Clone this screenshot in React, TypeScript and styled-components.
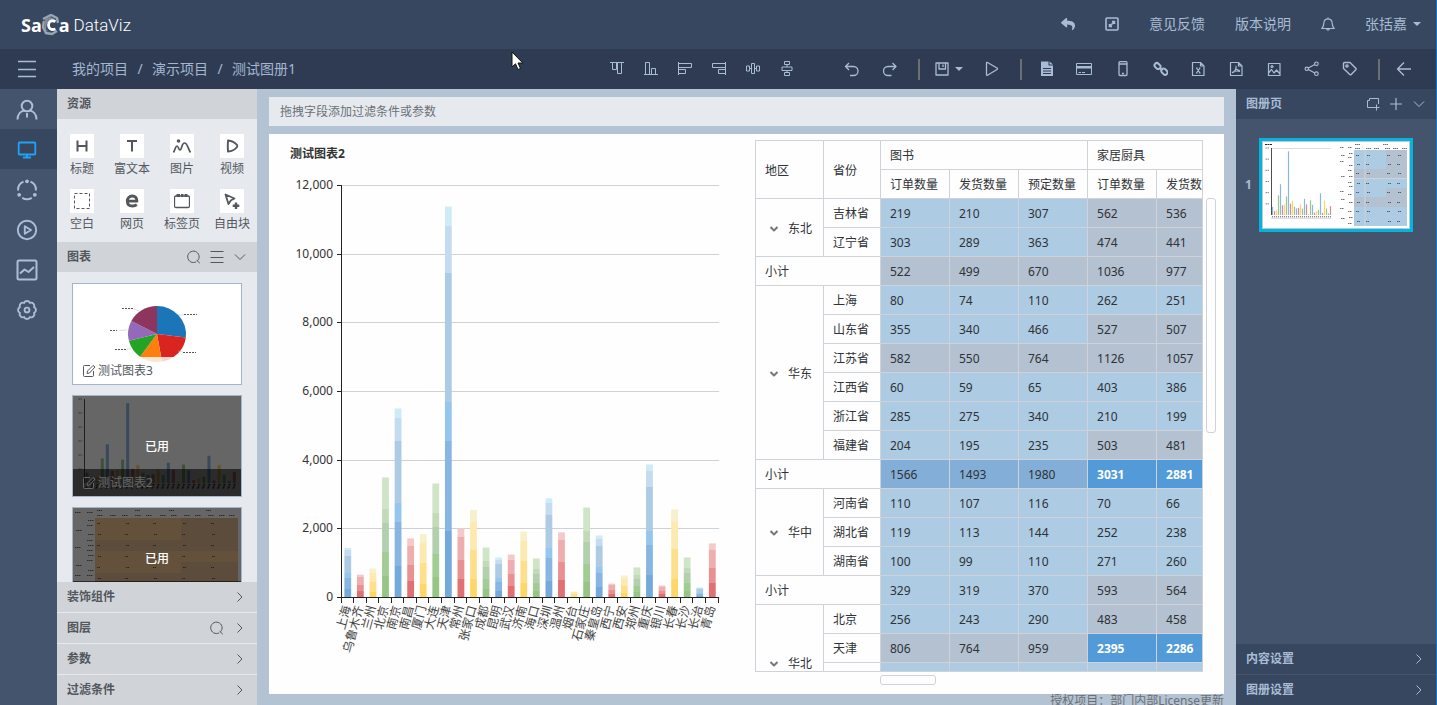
import React from 'react';
import styled, { createGlobalStyle } from 'styled-components';
import { FaReply } from 'react-icons/fa';

const GlobalStyle = createGlobalStyle`
  * { box-sizing: border-box; }
  body { margin: 0; overflow: hidden; background: #b4c3d3; }
  body, button, input { font-family: "Noto Sans", "Noto Sans CJK SC", sans-serif; font-size: 12px; line-height: 20px; }
  button { border: 0; padding: 0; background: none; color: inherit; cursor: pointer; }
  a { color: inherit; text-decoration: none; }
  h2, p, ul { margin: 0; padding: 0; font-size: inherit; list-style: none; }
`;

/* ---------- shell ---------- */

const Shell = styled.div`
  display: flex;
  flex-direction: column;
  height: 100vh;
  border-right: 1px solid #0a78d0;
  color: #a9bcd6;
`;
const Header = styled.header`
  display: flex;
  align-items: center;
  justify-content: space-between;
  flex: none;
  height: 49px;
  padding: 0 15px 0 21px;
  background: #37475f;
`;
const Logo = styled.a`
  display: flex;
  align-items: center;
  height: 24px;
  color: #fff;
  font-family: Roboto, sans-serif;
  font-size: 17px;
  line-height: 24px;
`;
const LogoBold = styled.b`
  font-family: "Noto Sans", sans-serif;
  font-size: 18px;
`;
const LogoName = styled.span`
  margin-left: 4px;
  font-weight: 300;
`;
const HeaderNav = styled.nav`
  display: flex;
  align-items: center;
  gap: 30px;
  padding-bottom: 2px;
  font-size: 14px;
`;
const HeaderButton = styled.button`
  display: flex;
  align-items: center;
  gap: 6px;
  font-size: 14px;
`;
const Toolbar = styled.div`
  display: flex;
  align-items: center;
  flex: none;
  height: 40px;
  padding-right: 13px;
  background: #2f3b52;
`;
const MenuButton = styled.button`
  display: grid;
  place-items: center;
  width: 54px;
  height: 40px;
`;
const Crumbs = styled.nav`
  display: flex;
  flex: 1;
  padding-left: 18px;
  font-size: 14px;
  color: #a3b7d1;
`;
const Slash = styled.span`
  width: 24px;
  text-align: center;
`;
const ToolGroup = styled.div<{ $end?: number }>`
  display: flex;
  margin-right: ${(p) => p.$end ?? 0}px;
`;
const ToolButton = styled.button<{ $w?: number }>`
  display: flex;
  align-items: center;
  justify-content: center;
  gap: 6px;
  width: ${(p) => p.$w ?? 38}px;
  height: 40px;
`;
const Divider = styled.span`
  width: 2px;
  height: 21px;
  margin: 0 5px 0 9px;
  background: #6d6f72;
`;
const Body = styled.div`
  display: flex;
  flex: 1;
  min-height: 0;
`;
const Rail = styled.nav`
  flex: none;
  width: 57px;
  background: #45546d;
`;
const RailButton = styled.button<{ $active?: boolean }>`
  display: grid;
  place-items: center;
  width: 100%;
  height: 40px;
  padding: 2px 3px 0 0;
  background: ${(p) => (p.$active ? '#37475f' : 'transparent')};
  color: ${(p) => (p.$active ? '#21a3f5' : '#aabfd8')};
`;

/* ---------- resource sidebar ---------- */

const Sidebar = styled.aside`
  display: flex;
  flex-direction: column;
  flex: none;
  width: 200px;
  background: #e6eaef;
  color: #53575c;
`;
const PanelHeader = styled.div`
  display: flex;
  align-items: center;
  gap: 9px;
  flex: none;
  height: 30px;
  padding: 0 10px;
  background: #d0d4d9;
`;
const PanelTitle = styled.h2`
  flex: 1;
  font-weight: 700;
`;
const IconButton = styled.button`
  display: grid;
  place-items: center;
  width: 14px;
  height: 20px;
`;
const ResourceGrid = styled.div`
  display: grid;
  grid-template-columns: repeat(4, 1fr);
  row-gap: 10px;
  padding: 15px 0 8px;
`;
const ResourceButton = styled.button`
  display: flex;
  flex-direction: column;
  align-items: center;
  gap: 1px;
  white-space: nowrap;
`;
const Tile = styled.span`
  display: grid;
  place-items: center;
  width: 24px;
  height: 24px;
  background: #fff;
`;
const CardList = styled.div`
  display: flex;
  flex-direction: column;
  gap: 10px;
  flex: 1;
  min-height: 0;
  overflow: hidden;
  padding: 11px 15px;
`;
const Card = styled.article`
  position: relative;
  flex: none;
  height: 102px;
  border: 1px solid #a5b4c8;
  background: #fff;
`;
const CardArt = styled.svg`
  display: block;
  width: 100%;
  height: 100%;
`;
const CardCaption = styled.div<{ $dark?: boolean }>`
  position: absolute;
  inset: auto 0 0 0;
  display: flex;
  align-items: center;
  gap: 2px;
  height: 27px;
  padding-left: 9px;
  background: ${(p) => (p.$dark ? 'rgba(0,0,0,.58)' : 'rgba(255,255,255,.8)')};
  color: ${(p) => (p.$dark ? '#fff' : '#53575c')};
`;
const CardOverlay = styled.div`
  position: absolute;
  inset: 0;
  display: grid;
  place-items: center;
  padding-top: 2px;
  background: rgba(0, 0, 0, 0.6);
  color: #fff;
  font-weight: 500;
`;
const SectionList = styled.div`
  display: flex;
  flex-direction: column;
  gap: 1px;
  flex: none;
`;

/* ---------- workspace ---------- */

const Main = styled.main`
  display: flex;
  flex-direction: column;
  flex: 1;
  min-width: 0;
  padding: 8px 12px 0;
  background: #b4c3d3;
`;
const FilterDrop = styled.div`
  flex: none;
  height: 29px;
  margin-bottom: 8px;
  padding: 5px 11px;
  background: #e6eaef;
  color: #6c7075;
`;
const Canvas = styled.section`
  display: grid;
  grid-template-columns: minmax(0, 1fr) 461px;
  grid-template-rows: minmax(0, 1fr);
  flex: 1;
  min-height: 0;
  padding: 6px 8px 9px 20px;
  background: #fefefe;
  color: #333;
`;
const ChartBox = styled.div`
  padding-top: 4px;
  overflow: hidden;
`;
const ChartTitle = styled.h2`
  font-weight: 700;
  padding-left: 1px;
`;
const ChartSvg = styled.svg`
  display: block;
  width: 100%;
  height: auto;
`;
const TableBox = styled.div`
  display: grid;
  grid-template-columns: minmax(0, 1fr) 10px;
  grid-template-rows: minmax(0, 1fr) 10px;
  gap: 3px;
  min-height: 0;
`;
const TableClip = styled.div`
  overflow: hidden;
  border: 1px solid #cfd2d8;
`;
const Table = styled.table`
  table-layout: fixed;
  width: 470px;
  border-spacing: 0;
  color: #2f3236;
`;
const cellBase = `
  height: 29px;
  padding: 2px 0 0 9px;
  border: solid #cfd2d8;
  border-width: 0 1px 1px 0;
  text-align: left;
  font-weight: 400;
  white-space: nowrap;
`;
const HeadCell = styled.th`
  ${cellBase}
`;
type Tone = 'light' | 'grey' | 'mid' | 'strong';
const tones: Record<Tone, string> = {
  light: '#adcbe3',
  grey: '#b3c1d1',
  mid: '#82aed7',
  strong: '#539ad8',
};
const DataCell = styled.td<{ $tone: Tone }>`
  ${cellBase}
  background: ${(p) => tones[p.$tone]};
  color: ${(p) => (p.$tone === 'strong' ? '#fff' : '#2f3236')};
  font-weight: ${(p) => (p.$tone === 'strong' ? 700 : 400)};
`;
const GroupToggle = styled.button`
  display: flex;
  align-items: center;
  gap: 8px;
  padding-left: 3px;

  svg {
    color: #74777b;
  }
`;
const VerticalThumb = styled.div`
  width: 10px;
  height: 235px;
  margin-top: 58px;
  border: 1px solid #cfd2d8;
  border-radius: 3px;
`;
const HorizontalThumb = styled.div`
  width: 56px;
  height: 10px;
  margin-left: 125px;
  border: 1px solid #cfd2d8;
  border-radius: 3px;
`;
const License = styled.p`
  flex: none;
  height: 11px;
  line-height: 14px;
  overflow: hidden;
  text-align: right;
  color: #6b6f75;
`;

/* ---------- pages panel ---------- */

const PagesPanel = styled.aside`
  display: flex;
  flex-direction: column;
  flex: none;
  width: 200px;
  background: #45546d;
`;
const PagesHeader = styled(PanelHeader)`
  background: #37475f;
`;
const PageList = styled.ul`
  flex: 1;
  padding: 19px 23px 0 9px;
`;
const PageItem = styled.li`
  display: grid;
  grid-template-columns: 14px 1fr;
  align-items: center;
  font-weight: 700;
`;
const PageThumb = styled.button`
  display: block;
  height: 94px;
  border: 3px solid #04b4dc;
  background: #fff;
`;
const PagesSection = styled(PanelHeader)`
  height: 31px;
  border-top: 1px solid #45546d;
  background: #37475f;
`;
const Pointer = styled.svg`
  position: absolute;
  left: 511px;
  top: 51px;
  pointer-events: none;
`;

/* ---------- icons ---------- */

type IconProps = { d: string; size?: number; box?: number; w?: number; fill?: string; children?: React.ReactNode };
const Icon = ({ d, size = 16, box = size, w = 1, fill, children }: IconProps) => (
  <svg width={size} height={size} viewBox={`0 0 ${box} ${box}`} fill="none" stroke="currentColor"
    strokeWidth={w} strokeLinejoin="round" aria-hidden="true">
    <path d={d} />
    {fill && <path d={fill} fill="currentColor" stroke="none" />}
    {children}
  </svg>
);
const Caret = () => (
  <svg width="8" height="4" viewBox="0 0 8 4" aria-hidden="true"><path d="M0 0H8L4 4Z" fill="currentColor" /></svg>
);
const RightChevron = () => <Icon size={14} d="M4.500 2.500L9 7L4.500 11.500" />;
const DownChevron = () => <Icon size={14} d="M2 4.500L7 9.500L12 4.500" />;
const SearchIcon = () => <Icon size={14} d="M10.500 10.800A5.700 5.700 0 1 0 9.200 11.800M9.600 10.200L12.800 13.200" />;

const alignTools = [
  ['顶部对齐', 'M1 1.500H15M3.500 1.500V8.500H7.500V1.500M8.500 1.500V12.500H12.500V1.500'],
  ['底部对齐', 'M1 13.500H15M2.500 13.500V1.500H6.500V13.500M8.500 13.500V7.500H12.500V13.500'],
  ['左对齐', 'M1.500 1V14M1.500 2.500H14.500V6.500H1.500M1.500 8.500H8.500V12.500H1.500'],
  ['右对齐', 'M14.500 1V14M14.500 2.500H1.500V6.500H14.500M14.500 8.500H7.500V12.500H14.500'],
  ['水平居中', 'M1.500 5H4.500V10H1.500ZM6.500 2.500H9.500V12.500H6.500ZM11.500 5H14.500V10H11.500ZM4.500 7.500H6.500M9.500 7.500H11.500'],
  ['垂直居中', 'M5.500 0.500H10.500V3.500H5.500ZM3 6H13V9.500H3ZM5.500 11.500H10.500V14.500H5.500ZM8 3.500V6M8 9.500V11.500'],
];

const exportTools: [string, React.ReactNode][] = [
  ['文档', <svg key="i" width="16" height="16" viewBox="0 0 16 16"><path d="M3 0.500H10.500V4.500H15V15H3Z M11.500 0.500L15 3.500H11.500Z" fill="currentColor" /><path d="M5 7.500H13M5 10H13M5 12.500H13" stroke="#2f3b52" /></svg>],
  ['卡片', <Icon key="i" d="M0.500 2.500H15.500V13.500H0.500ZM2.500 11.500H5M6 11.500H9" fill="M1 5H15V7.500H1Z" />],
  ['手机', <Icon key="i" w={1.300} d="M6 0.700H12Q13 0.700 13 1.700V13.500Q13 14.500 12 14.500H6Q5 14.500 5 13.500V1.700Q5 0.700 6 0.700ZM5 3H13M8 12.500H10" />],
  ['链接', <Icon key="i" w={2} d="M9.500 9L8.300 7.800M7.700 7.400L8.500 6.600A2.600 2.600 0 0 0 8.300 4.600L6.500 2.700A2.300 2.300 0 0 0 3.200 6L5.100 7.900A2.300 2.300 0 0 0 7.700 7.400M10 8.500L9.300 9.200A2.600 2.600 0 0 0 9.700 11.300L11.500 13.100A2.300 2.300 0 0 0 14.800 9.800L13 8A2.300 2.300 0 0 0 10 8.500" />],
  ['导出表格', <Icon key="i" w={1.200} d="M2.500 1.500H10.500L14 5V14.500H2.500ZM10.500 1.500V5H14M6 7H7.500M9 7H10.500M6 12H7.500M9 12H10.500M6.500 7L10 12M10 7L6.500 12" />],
  ['导出文档', <Icon key="i" w={1.200} d="M2.500 1.500H10.500L14 5V14.500H2.500ZM10.500 1.500V5H14M7.500 5C8.500 5 8 7.500 7.500 8.500C7 10 5 12 4.500 11.500C4.500 10.500 8.500 9.500 11.500 10.300C12 9 9 9.500 7.800 7.500" />],
  ['导出图片', <Icon key="i" w={1.200} d="M2.500 2.500H14V14.500H2.500ZM2.500 12L5.500 8.500L8 12L10.500 9L14 13"><circle cx="6" cy="5.500" r="1" /></Icon>],
  ['分享', <Icon key="i" w={1.200} d="M4.300 7L10.800 3.500M4.300 8.500L10.800 12"><circle cx="2.800" cy="7.800" r="1.700" /><circle cx="12.400" cy="2.800" r="1.800" /><circle cx="12.400" cy="12.700" r="1.800" /></Icon>],
  ['标签', <Icon key="i" w={1.400} d="M1.500 2.500Q1.500 1.500 2.500 1.500H8L13.800 7.300Q14.500 8 13.800 8.700L9.200 13.500Q8.500 14.200 7.800 13.500L1.500 7.500Z"><circle cx="5" cy="5" r="1.100" /></Icon>],
];

const railTools: [string, React.ReactNode][] = [
  ['用户', <Icon key="i" size={22} w={2} d="M1.500 20.500C1.500 15 5 12 8.500 11.500M20.500 20.500C20.500 15 17 12 13.500 11.500M11 14V18.500"><circle cx="11" cy="7" r="5.300" /></Icon>],
  ['展示', <Icon key="i" size={22} w={1.800} d="M3.500 3.500H18.500Q19.300 3.500 19.300 4.300V14.700Q19.300 15.500 18.500 15.500H3.500Q2.700 15.500 2.700 14.700V4.300Q2.700 3.500 3.500 3.500ZM7 18.500H15M10 17H12" />],
  ['流程', <Icon key="i" size={22} w={2} d="M7.500 2.600A9 9 0 0 0 2.100 11.500M14.500 2.600A9 9 0 0 1 19.900 11.500M6.200 18.800A9 9 0 0 0 15.800 18.800"><circle cx="11" cy="2.300" r="1.900" fill="currentColor" stroke="none" /><circle cx="3.200" cy="15.800" r="1.900" fill="currentColor" stroke="none" /><circle cx="18.800" cy="15.800" r="1.900" fill="currentColor" stroke="none" /></Icon>],
  ['播放', <Icon key="i" size={22} w={1.900} d="M8.800 7.200L15 11L8.800 14.800Z"><circle cx="11" cy="11" r="9.200" /></Icon>],
  ['分析', <Icon key="i" size={22} w={2} d="M3 1.500H19Q20.500 1.500 20.500 3V19Q20.500 20.500 19 20.500H3Q1.500 20.500 1.500 19V3Q1.500 1.500 3 1.500ZM4 14.500L8.500 10.500L12.500 13L18 8" />],
  ['设置', <Icon key="i" size={22} w={1.900} d="M18.100 8.100A3.200 3.200 0 0 1 18.100 13.900A3.200 3.200 0 0 1 13.900 18.100A3.200 3.200 0 0 1 8.100 18.100A3.200 3.200 0 0 1 3.900 13.900A3.200 3.200 0 0 1 3.900 8.100A3.200 3.200 0 0 1 8.100 3.900A3.200 3.200 0 0 1 13.900 3.900A3.200 3.200 0 0 1 18.100 8.100Z"><circle cx="11" cy="11" r="2.400" /></Icon>],
];

const resources: [string, React.ReactNode][] = [
  ['标题', <Icon key="i" w={2} d="M3.500 2.500V13.500M12.500 2.500V13.500M3.500 8H12.500" />],
  ['富文本', <Icon key="i" w={2} d="M3 3H13M8 3V13.500" />],
  ['图片', <svg key="i" width="20" height="16" viewBox="0 0 20 16" fill="none" stroke="currentColor" strokeWidth="1.700"><path d="M1.500 14.500C3.500 11 3.500 8 5 8C6.500 8 6.500 12 8 12C10 12 9.500 5 12.500 5C15.500 5 16 11 18.500 14.500" /><circle cx="6.500" cy="3" r="1.800" fill="currentColor" stroke="none" /></svg>],
  ['视频', <Icon key="i" w={1.900} d="M4 2.500C8 2.800 11 4.500 13 7Q13.500 8 13 9C11 11.500 8 13.200 4 13.500Q3.500 8 4 2.500Z" />],
  ['空白', <svg key="i" width="16" height="16" viewBox="0 0 16 16" fill="none" stroke="currentColor"><rect x="0.500" y="0.500" width="15" height="15" strokeDasharray="3 2" /></svg>],
  ['网页', <Icon key="i" w={2.800} d="M3.500 8.200H13C13 4.800 11 3 8.300 3C5.300 3 3.300 5.200 3.300 8.200C3.300 11.300 5.500 13 8.500 13C10.500 13 11.800 12.500 12.800 11.700" />],
  ['标签页', <Icon key="i" w={1.300} d="M2 3H14Q15.500 3 15.500 4.500V13Q15.500 14.500 14 14.500H2Q0.500 14.500 0.500 13V4.500Q0.500 3 2 3Z" fill="M2.500 1H6V4H2.500ZM7 1H9.500V4H7ZM10.500 1H13.500V4H10.500Z" />],
  ['自由块', <Icon key="i" w={1.800} d="M1.500 1.500L10.500 5.500L7 7.200L4.500 11Z"><path d="M12 9.500V16M8.700 12.700H15.300" strokeWidth="2.400" /></Icon>],
];

/* ---------- data ---------- */

const cities: [string, number][] = [
  ['上海', 1460], ['乌鲁木齐', 680], ['兰州', 860], ['北京', 3510], ['南京', 5520], ['南昌', 1735],
  ['厦门', 1860], ['大连', 3335], ['天津', 11400], ['常州', 2025], ['张家口', 2565], ['成都', 1470],
  ['昆明', 1180], ['武汉', 1265], ['济南', 1935], ['海口', 1150], ['深圳', 2900], ['温州', 1910],
  ['烟台', 190], ['石家庄', 2635], ['秦皇岛', 1820], ['西宁', 420], ['西安', 655], ['郑州', 890],
  ['重庆', 3890], ['银川', 365], ['长春', 2580], ['长沙', 1180], ['长治', 306], ['青岛', 1590],
];

/* each band: the colour and the percentage of the bar where it ends */
const gradients: [string, number][][] = [
  [['#cdecf5', 5], ['#c5dbf0', 17], ['#adcbe4', 50], ['#95c6ed', 60], ['#88b5e1', 83], ['#74aadb', 100]],
  [['#f3c9c9', 12], ['#eeaeb0', 45], ['#e89092', 72], ['#e07072', 100]],
  [['#f7f0cc', 14], ['#fdeab0', 45], ['#fee08c', 78], ['#fdd868', 100]],
  [['#d0e5c8', 26], ['#c3dab8', 38], ['#b2d0ae', 62], ['#a1cc93', 82], ['#97c586', 100]],
];
const flat = ['#74aadb', '#e07072', '#fdcb50', '#86bd78'];

type Row = { group?: string; span?: number; name?: string; v: number[] };
const rows: Row[] = [
  { group: '东北', span: 2, name: '吉林省', v: [219, 210, 307, 562, 536] },
  { name: '辽宁省', v: [303, 289, 363, 474, 441] },
  { v: [522, 499, 670, 1036, 977] },
  { group: '华东', span: 6, name: '上海', v: [80, 74, 110, 262, 251] },
  { name: '山东省', v: [355, 340, 466, 527, 507] },
  { name: '江苏省', v: [582, 550, 764, 1126, 1057] },
  { name: '江西省', v: [60, 59, 65, 403, 386] },
  { name: '浙江省', v: [285, 275, 340, 210, 199] },
  { name: '福建省', v: [204, 195, 235, 503, 481] },
  { v: [1566, 1493, 1980, 3031, 2881] },
  { group: '华中', span: 3, name: '河南省', v: [110, 107, 116, 70, 66] },
  { name: '湖北省', v: [119, 113, 144, 252, 238] },
  { name: '湖南省', v: [100, 99, 110, 271, 260] },
  { v: [329, 319, 370, 593, 564] },
  { group: '华北', span: 4, name: '北京', v: [256, 243, 290, 483, 458] },
  { name: '天津', v: [806, 764, 959, 2395, 2286] },
];
const pendingRows = [0, 1];
const toneOf = (value: number, col: number): Tone => {
  if (value > 2000) return 'strong';
  if (value > 1400) return 'mid';
  return value > (col === 2 ? 480 : 440) ? 'grey' : 'light';
};

/* ---------- charts ---------- */

const PLOT = { left: 53, top: 22, height: 412, step: 12.570 };

const BarChart = () => {
  const base = PLOT.top + PLOT.height;
  const right = PLOT.left + PLOT.step * cities.length;
  return (
    <ChartSvg viewBox="0 0 466 500" role="img" aria-label="测试图表2">
      <defs>
        {gradients.map((bands, g) => (
          <linearGradient key={g} id={`bar${g}`} x1="0" y1="0" x2="0" y2="1">
            {bands.map(([color, end], i) => (
              <React.Fragment key={color}>
                <stop offset={`${i ? bands[i - 1][1] : 0}%`} stopColor={color} />
                <stop offset={`${end}%`} stopColor={color} />
              </React.Fragment>
            ))}
          </linearGradient>
        ))}
      </defs>
      {[0, 2000, 4000, 6000, 8000, 10000, 12000].map((tick) => {
        const y = Math.round(base - (tick / 12000) * PLOT.height) - 0.5;
        return (
          <g key={tick}>
            {tick > 0 && <path d={`M${PLOT.left} ${y}H${right}`} stroke="#cfd1d8" />}
            <path d={`M${PLOT.left - 5} ${y}H${PLOT.left}`} stroke="#222" />
            <text x={PLOT.left - 9} y={y + 3} textAnchor="end" fontSize="12" fill="#333">{tick.toLocaleString('en-US')}</text>
          </g>
        );
      })}
      {cities.map(([name, value], i) => {
        const h = (value / 12000) * PLOT.height;
        const cx = PLOT.left + PLOT.step * (i + 0.5) - 0.5;
        return (
          <g key={name}>
            <rect x={cx - 3.400} y={base - h} width="6.800" height={h} fill={`url(#bar${i % 4})`} />
            <text transform={`translate(${cx + 3} ${base + 9}) rotate(-75)`} textAnchor="end" fontSize="12" fill="#444">{name}</text>
          </g>
        );
      })}
      <path d={`M${PLOT.left - 0.5} ${PLOT.top - 1}V${base}M${PLOT.left - 1} ${base - 0.5}H${right}`} stroke="#222" fill="none" />
      {Array.from({ length: 31 }, (_, i) => Math.floor(PLOT.left + PLOT.step * i) - 0.5).map((x) => (
        <path key={x} d={`M${x} ${base}V${base + 5}`} stroke="#222" />
      ))}
    </ChartSvg>
  );
};

type MiniProps = { x: number; base: number; height: number; step: number; barW: number };
const MiniBars = ({ x, base, height, step, barW }: MiniProps) => (
  <g>
    {cities.map(([name, value], i) => {
      const h = (value / 12000) * height;
      return (
        <g key={name}>
          <rect x={x + step * (i + 0.5) - barW / 2} y={base - h} width={barW} height={h} fill={flat[i % 4]} opacity="0.850" />
          <path d={`M${x + step * (i + 0.6)} ${base + 1}l${-step / 3} ${step * 0.8 + 1}`} stroke="#333" strokeWidth={step / 3} strokeDasharray="1 0.600" />
        </g>
      );
    })}
    {[0, 1, 2, 3, 4, 5].map((i) => (
      <path key={i} d={`M${x - 6} ${base - height + (i * height) / 6}h4`} stroke="#555" strokeDasharray="1.500 0.500" opacity="0.700" />
    ))}
    <path d={`M${x} ${base - height}V${base}`} stroke="#222" strokeWidth="0.800" />
  </g>
);

const Specks = ({ xs, ys, w = 3 }: { xs: number[]; ys: number[]; w?: number }) => (
  <g stroke="#222" strokeDasharray="1.500 0.500" opacity="0.650">
    {ys.map((y, r) => xs.map((x, c) => <path key={`${x}-${y}`} d={`M${x + ((r + c) % 2)} ${y}h${w}`} />))}
  </g>
);

const pieSlices: [string, number, number][] = [
  ['#1a76b8', 0, 97], ['#d9241f', 97, 170], ['#ff7f0e', 170, 216],
  ['#24a424', 216, 256], ['#9569ba', 256, 298], ['#8c355e', 298, 360],
];
const slicePath = (from: number, to: number) => {
  const at = (a: number) => {
    const r = ((a - 90) * Math.PI) / 180;
    return `${(84 + 29 * Math.cos(r)).toFixed(1)} ${(50 + 28 * Math.sin(r)).toFixed(1)}`;
  };
  return `M84 50L${at(from)}A29 28 0 0 1 ${at(to)}Z`;
};

const PieArt = () => (
  <CardArt viewBox="0 0 168 100">
    {pieSlices.map(([color, from, to]) => <path key={color} d={slicePath(from, to)} fill={color} />)}
    <g stroke="#555" strokeDasharray="2 1">
      <path d="M49 24.500H61M111 30.500H124M37 46.500H44M42 65.500H54M110 68.500H123" />
    </g>
    <path d="M61 25L66 27M105 31H111M46 46.500L54 46M54 65L58 65M105 67L110 68" stroke="#bbb" strokeWidth="0.500" />
  </CardArt>
);
const BarsArt = () => (
  <CardArt viewBox="0 0 168 100">
    <MiniBars x={11.500} base={87} height={84} step={5.080} barW={3} />
  </CardArt>
);
const TableArt = () => (
  <CardArt viewBox="0 0 168 100">
    <path d="M22 10H165V100H22Z" fill="#e4be96" />
    <path d="M22 10H108V32H22ZM22 43H165V54H22ZM108 54H22V65H108Z" fill="#fbcb96" />
    <Specks xs={[24, 61, 96, 132]} ys={[2.500]} w={5} />
    <Specks xs={[24, 36, 49, 61, 73, 86, 98, 110, 122, 134, 146, 155]} ys={[7.500]} w={6} />
    <Specks xs={[24, 52, 80, 109, 138]} ys={[15.500, 26.500, 37.500, 48.500, 59.500, 70.500]} />
    <Specks xs={[14]} ys={[4.500, 12.500, 17.500, 26.500, 32.500, 37.500, 42.500, 47.500, 52.500, 62.500, 67.500]} w={6} />
    <Specks xs={[2]} ys={[4.500, 22.500, 39.500, 57.500, 67.500]} w={6} />
  </CardArt>
);
const PageArt = () => (
  <CardArt viewBox="0 0 148 88">
    <rect x="0.500" y="0.500" width="147" height="87" fill="#fff" stroke="#bfc6cf" />
    <path d="M3 3.500H10" stroke="#222" strokeDasharray="2 0.500" />
    <path d="M10 7.500H69" stroke="#ddd" />
    <MiniBars x={9.500} base={74} height={67} step={2} barW={1.200} />
    <path d="M92 9H145V85H92Z" fill="#adcbe3" />
    <path d="M124 9H145V28H124ZM92 28H145V37H92ZM124 47H145V56H124ZM92 56H145V66H92Z" fill="#b3c1d1" />
    <path d="M103 9V85M92 37.500H145" stroke="#cfd2d8" />
    <Specks xs={[93, 120]} ys={[3.500]} w={5} />
    <Specks xs={[93, 103, 112, 122, 131, 139]} ys={[7.500]} w={5} />
    <Specks xs={[94, 104, 125, 135]} ys={[14.500, 23.500, 32.500, 42.500, 51.500, 61.500, 70.500, 80.500]} />
    <Specks xs={[86]} ys={[6.500, 12.500, 16.500, 24.500, 29.500, 35.500, 41.500, 45.500, 53.500, 61.500, 70.500, 76.500, 82.500]} w={4} />
    <Specks xs={[78]} ys={[6.500, 14.500, 20.500, 35.500, 50.500, 58.500, 67.500, 77.500]} w={4} />
  </CardArt>
);

const EditIcon = () => (
  <Icon size={14} d="M8 1.500H2.500Q1.500 1.500 1.500 2.500V11.500Q1.500 12.500 2.500 12.500H10.500Q11.500 12.500 11.500 11.500V7M5 9.500L5.500 7L11 1.500L13 3L7.500 9Z" />
);

/* ---------- views ---------- */

const CrossTable = () => (
  <Table>
    <colgroup>
      <col width="68" /><col width="57" />
      {[0, 1, 2, 3, 4].map((c) => <col key={c} width="69" />)}
    </colgroup>
    <thead>
      <tr>
        <HeadCell rowSpan={2}>地区</HeadCell>
        <HeadCell rowSpan={2}>省份</HeadCell>
        <HeadCell colSpan={3}>图书</HeadCell>
        <HeadCell colSpan={2}>家居厨具</HeadCell>
      </tr>
      <tr>
        {['订单数量', '发货数量', '预定数量', '订单数量', '发货数量'].map((h, i) => <HeadCell key={i}>{h}</HeadCell>)}
      </tr>
    </thead>
    <tbody>
      {rows.map((row, r) => (
        <tr key={r}>
          {row.group && (
            <HeadCell rowSpan={row.span}>
              <GroupToggle>
                <Icon size={12} w={2} d="M2.500 4L6 7.500L9.500 4" />
                {row.group}
              </GroupToggle>
            </HeadCell>
          )}
          {row.name ? <HeadCell>{row.name}</HeadCell> : <HeadCell colSpan={2}>小计</HeadCell>}
          {row.v.map((value, c) => <DataCell key={c} $tone={toneOf(value, c)}>{value}</DataCell>)}
        </tr>
      ))}
      {pendingRows.map((r) => (
        <tr key={`pending${r}`}>
          <HeadCell />
          {[0, 1, 2, 3, 4].map((c) => <DataCell key={c} $tone="light" />)}
        </tr>
      ))}
    </tbody>
  </Table>
);

const LeftPanel = () => (
  <Sidebar>
    <PanelHeader><PanelTitle>资源</PanelTitle></PanelHeader>
    <ResourceGrid>
      {resources.map(([label, icon]) => (
        <ResourceButton key={label}><Tile>{icon}</Tile>{label}</ResourceButton>
      ))}
    </ResourceGrid>
    <PanelHeader>
      <PanelTitle>图表</PanelTitle>
      <IconButton aria-label="搜索图表"><SearchIcon /></IconButton>
      <IconButton aria-label="列表"><Icon size={14} d="M0.500 1.500H13.500M0.500 7.500H13.500M0.500 12.500H13.500" /></IconButton>
      <IconButton aria-label="收起图表"><DownChevron /></IconButton>
    </PanelHeader>
    <CardList>
      <Card>
        <PieArt />
        <CardCaption><EditIcon />测试图表3</CardCaption>
      </Card>
      <Card>
        <BarsArt />
        <CardCaption $dark><EditIcon />测试图表2</CardCaption>
        <CardOverlay>已用</CardOverlay>
      </Card>
      <Card>
        <TableArt />
        <CardCaption $dark />
        <CardOverlay>已用</CardOverlay>
      </Card>
    </CardList>
    <SectionList>
      {['装饰组件', '图层', '参数', '过滤条件'].map((title) => (
        <PanelHeader key={title}>
          <PanelTitle>{title}</PanelTitle>
          {title === '图层' && <IconButton aria-label="搜索图层"><SearchIcon /></IconButton>}
          <IconButton aria-label={title}><RightChevron /></IconButton>
        </PanelHeader>
      ))}
    </SectionList>
  </Sidebar>
);

const RightPanel = () => (
  <PagesPanel>
    <PagesHeader>
      <PanelTitle>图册页</PanelTitle>
      <IconButton aria-label="复制页"><Icon size={14} d="M3.500 3.500V1.500H12.500V7M3.500 3.500H1.500V10.500H8M10.500 7.500V13.500M7.500 10.500H13.500" /></IconButton>
      <IconButton aria-label="新增页"><Icon size={14} w={1.200} d="M7 1V13M1 7H13" /></IconButton>
      <IconButton aria-label="收起"><DownChevron /></IconButton>
    </PagesHeader>
    <PageList>
      <PageItem>1<PageThumb aria-label="第 1 页"><PageArt /></PageThumb></PageItem>
    </PageList>
    {['内容设置', '图册设置'].map((title) => (
      <PagesSection key={title}>
        <PanelTitle>{title}</PanelTitle>
        <IconButton aria-label={title}><RightChevron /></IconButton>
      </PagesSection>
    ))}
  </PagesPanel>
);

export default function App() {
  return (
    <Shell>
      <GlobalStyle />
      <Header>
        <Logo href="#">
          <LogoBold>Sa</LogoBold>
          <svg width="17" height="22" viewBox="0 0 17 22" aria-hidden="true">
            <path d="M1 5L9 1L15 4L16 9M2 7L1 13L4 19L10 20L15 17" fill="none" stroke="#9aa6b5" strokeWidth="2.500" />
            <path d="M3 5L8 3L13 5L9 6L5 9L4 15L7 18L3 16L2 10Z" fill="#7c8a9d" />
            <path d="M13.500 7.500C9 5.500 6.500 8 6.500 11C6.500 14.500 9 16.500 13.500 15" fill="none" stroke="#fff" strokeWidth="2.800" />
          </svg>
          <LogoBold>a</LogoBold>
          <LogoName>DataViz</LogoName>
        </Logo>
        <HeaderNav>
          <HeaderButton aria-label="返回"><FaReply size={14} /></HeaderButton>
          <HeaderButton aria-label="全屏">
            <Icon size={14} w={1.600} d="M2 1H12Q13 1 13 2V12Q13 13 12 13H2Q1 13 1 12V2Q1 1 2 1ZM4.500 9.500L9.500 4.500M7 4.500H9.500V7M4.500 7V9.500H7" />
          </HeaderButton>
          <a href="#feedback">意见反馈</a>
          <a href="#release">版本说明</a>
          <HeaderButton aria-label="通知">
            <Icon size={14} w={1.200} d="M0.800 11.500C3 9.500 2.500 7.500 3 5C3.500 2.500 5 1.800 7 1.800C9 1.800 10.500 2.500 11 5C11.500 7.500 11 9.500 13.200 11.500ZM7 0.500V2M5.500 11.800Q7 14.500 8.500 11.800" />
          </HeaderButton>
          <HeaderButton>张括嘉<Caret /></HeaderButton>
        </HeaderNav>
      </Header>
      <Toolbar>
        <MenuButton aria-label="菜单">
          <Icon size={18} d="M0 1.500H18M0 9.500H18M0 16.500H18" w={1.400} />
        </MenuButton>
        <Crumbs>
          <a href="#projects">我的项目</a><Slash>/</Slash>
          <a href="#demo">演示项目</a><Slash>/</Slash>
          <a href="#album">测试图册1</a>
        </Crumbs>
        <ToolGroup $end={29}>
          {alignTools.map(([label, d]) => <ToolButton key={label} $w={34} aria-label={label}><Icon d={d} /></ToolButton>)}
        </ToolGroup>
        <ToolGroup>
          <ToolButton aria-label="撤销"><Icon w={1.300} d="M5 2L1.500 5.500L5 9M1.500 5.500H9.500A4.500 4.500 0 0 1 9.500 14.500H6" /></ToolButton>
          <ToolButton aria-label="重做"><Icon w={1.300} d="M10.500 2L14 5.500L10.500 9M14 5.500H6A4.500 4.500 0 0 0 6 14.500H9.500" /></ToolButton>
        </ToolGroup>
        <Divider />
        <ToolGroup>
          <ToolButton $w={48} aria-label="保存">
            <Icon size={14} w={1.300} d="M1 1H13V13H1ZM4 1V7H10.500V1M8 2.500V5" /><Caret />
          </ToolButton>
          <ToolButton aria-label="预览"><Icon w={1.300} d="M2.500 2Q2.500 1 3.500 1.500L13 7Q14 7.700 13 8.500L3.500 14.200Q2.500 14.500 2.500 13.500Z" /></ToolButton>
        </ToolGroup>
        <Divider />
        <ToolGroup>
          {exportTools.map(([label, icon]) => <ToolButton key={label} aria-label={label}>{icon}</ToolButton>)}
        </ToolGroup>
        <Divider />
        <ToolButton aria-label="退出"><Icon w={1.300} d="M15 8H2M8 1.500L1.500 8L8 14.500" /></ToolButton>
      </Toolbar>
      <Body>
        <Rail>
          {railTools.map(([label, icon], i) => (
            <RailButton key={label} $active={i === 1} aria-label={label}>{icon}</RailButton>
          ))}
        </Rail>
        <LeftPanel />
        <Main>
          <FilterDrop>拖拽字段添加过滤条件或参数</FilterDrop>
          <Canvas>
            <ChartBox>
              <ChartTitle>测试图表2</ChartTitle>
              <BarChart />
            </ChartBox>
            <TableBox>
              <TableClip><CrossTable /></TableClip>
              <VerticalThumb />
              <HorizontalThumb />
            </TableBox>
          </Canvas>
          <License>授权项目：部门内部License更新</License>
        </Main>
        <RightPanel />
      </Body>
      <Pointer width="13" height="20" viewBox="0 0 13 20" aria-hidden="true">
        <path d="M1 1V16L4.500 12.800L7 18.500L9.500 17.500L7 12H11.800Z" fill="#fff" stroke="#111" />
      </Pointer>
    </Shell>
  );
}
